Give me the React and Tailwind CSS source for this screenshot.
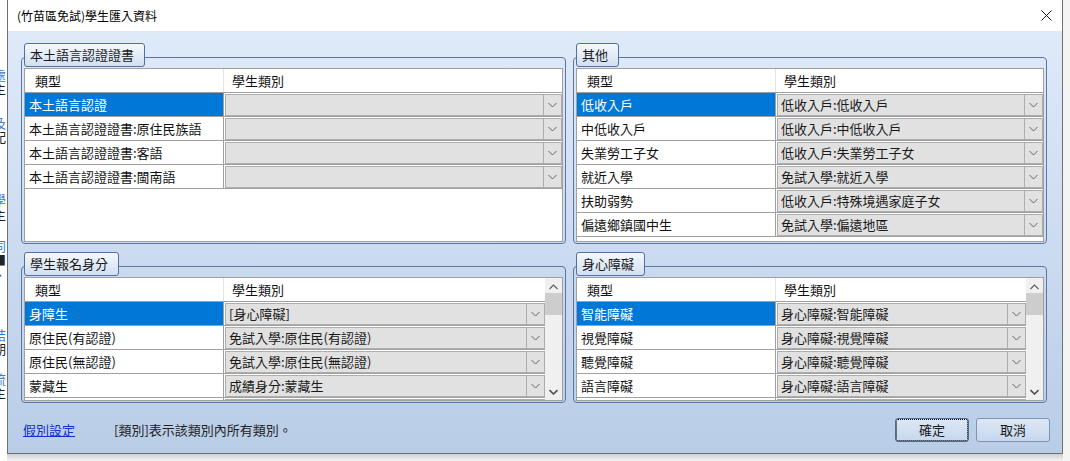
import React from "react";

const topLeft = [
  ["本土語言認證", ""],
  ["本土語言認證證書:原住民族語", ""],
  ["本土語言認證證書:客語", ""],
  ["本土語言認證證書:閩南語", ""],
];
const topRight = [
  ["低收入戶", "低收入戶:低收入戶"],
  ["中低收入戶", "低收入戶:中低收入戶"],
  ["失業勞工子女", "低收入戶:失業勞工子女"],
  ["就近入學", "免試入學:就近入學"],
  ["扶助弱勢", "低收入戶:特殊境遇家庭子女"],
  ["偏遠鄉鎮國中生", "免試入學:偏遠地區"],
];
const bottomLeft = [
  ["身障生", "[身心障礙]"],
  ["原住民(有認證)", "免試入學:原住民(有認證)"],
  ["原住民(無認證)", "免試入學:原住民(無認證)"],
  ["蒙藏生", "成績身分:蒙藏生"],
  ["僑生", "成績身分:僑生"],
];
const bottomRight = [
  ["智能障礙", "身心障礙:智能障礙"],
  ["視覺障礙", "身心障礙:視覺障礙"],
  ["聽覺障礙", "身心障礙:聽覺障礙"],
  ["語言障礙", "身心障礙:語言障礙"],
  ["肢體障礙", "身心障礙:肢體障礙"],
];

function Chevron() {
  return (
    <svg width="9" height="6" viewBox="0 0 9 6">
      <path d="M0.5 1 L4.5 5 L8.5 1" fill="none" stroke="#666" strokeWidth="1" />
    </svg>
  );
}

function Combo({ text }) {
  return (
    <div className="h-full flex border border-[#adadad] bg-[#e1e1e1]">
      <div className="flex-1 min-w-0 pl-[3px] flex items-center whitespace-nowrap overflow-hidden text-[#1a1a1a]">
        {text}
      </div>
      <div className="w-[18px] shrink-0 border-l border-[#adadad] flex items-center justify-center">
        <Chevron />
      </div>
    </div>
  );
}

function Scrollbar() {
  return (
    <div className="w-[17px] shrink-0 bg-[#f0f0f0] flex flex-col">
      <div className="h-[15px] shrink-0 flex items-center justify-center pt-[2px]">
        <svg width="9" height="6" viewBox="0 0 9 6">
          <path d="M0.5 5 L4.5 1 L8.5 5" fill="none" stroke="#606060" strokeWidth="1.2" />
        </svg>
      </div>
      <div className="h-[22px] shrink-0 bg-[#cdcdcd]" />
      <div className="flex-1" />
      <div className="h-[15px] shrink-0 flex items-center justify-center pb-[2px]">
        <svg width="9" height="6" viewBox="0 0 9 6">
          <path d="M0.5 1 L4.5 5 L8.5 1" fill="none" stroke="#505050" strokeWidth="1.6" />
        </svg>
      </div>
    </div>
  );
}

function Table({ rows, scroll }) {
  return (
    <div className="mt-[1px] flex-1 min-h-0 flex border border-[#a0a0a0] bg-white overflow-hidden">
      <div className="flex-1 min-w-0 flex flex-col">
        <div className="h-[24px] shrink-0 flex border-b border-[#a0a0a0]">
          <div className="w-[199px] shrink-0 border-r border-[#e3e3e3] pl-[10px] flex items-center">類型</div>
          <div className="flex-1 pl-[8px] flex items-center">學生類別</div>
        </div>
        {rows.map(([a, b], i) => (
          <div key={i} className="h-[24px] shrink-0 flex border-b border-[#a0a0a0]">
            <div
              className={
                i === 0
                  ? "w-[199px] shrink-0 border-r border-[#a0a0a0] pl-[4px] flex items-center bg-[#0078d7] text-white whitespace-nowrap"
                  : "w-[199px] shrink-0 border-r border-[#a0a0a0] pl-[4px] flex items-center whitespace-nowrap"
              }
            >
              {a}
            </div>
            <div className="flex-1 min-w-0 pt-[1px] pl-[1px]">
              <Combo text={b} />
            </div>
          </div>
        ))}
      </div>
      {scroll && <Scrollbar />}
    </div>
  );
}

function Group({ title, children }) {
  return (
    <div className="flex flex-col h-full min-h-0">
      <div className="mt-[14px] flex-1 min-h-0 border border-[#5b76a0] rounded-[4px] flex flex-col px-[2px] pb-[1px]">
        <div className="-mt-[15px] self-start h-[24px] pl-[5px] pr-[10px] flex items-center border border-[#5470a0] rounded-[3px] bg-linear-to-b from-[#f6f9fd] to-[#d2dff1] text-[#1a1a1a]">
          {title}
        </div>
        {children}
      </div>
    </div>
  );
}

export default function App() {
  return (
    <div className="w-[1070px] h-[461px] flex bg-[#f4f4f4] overflow-hidden text-[13px] leading-[16px] text-[#111] font-['Noto_Sans_CJK_TC','Noto_Sans_CJK_SC',sans-serif]">
      {/* background app strip */}
      <div className="w-[7px] shrink-0 overflow-hidden bg-white flex flex-col leading-[14px]">
        <div className="mt-[68px] -ml-[7px] text-[#3a7bd5]">處</div>
        <div className="-ml-[7px] text-[#222]">主</div>
        <div className="mt-[20px] -ml-[7px] text-[#3a7bd5]">及</div>
        <div className="-ml-[7px] text-[#222]">配</div>
        <div className="mt-[49px] -ml-[7px] text-[#3a7bd5]">學</div>
        <div className="mt-[1px] -ml-[7px] text-[#222]">主</div>
        <div className="mt-[17px] -ml-[7px] text-[#3a7bd5]">同</div>
        <div className="-ml-[7px] text-[#222]">■</div>
        <div className="-ml-[7px] text-[#222]">、</div>
        <div className="mt-[47px] -ml-[7px] text-[#3a7bd5]">結</div>
        <div className="-ml-[7px] text-[#222]">期</div>
        <div className="mt-[16px] -ml-[7px] text-[#3a7bd5]">流</div>
        <div className="-ml-[7px] text-[#222]">主</div>
      </div>

      <div className="flex flex-col">
        <div className="w-[1056px] h-[454px] shrink-0 border-x border-b border-[#707070] flex flex-col">
          {/* title bar */}
          <div className="h-[31px] shrink-0 bg-white flex items-center pl-[9px] pr-[9px]">
            <div className="flex-1 text-[12px] text-black">(竹苗區免試)學生匯入資料</div>
            <svg width="11" height="11" viewBox="0 0 11 11" className="mr-[1px]">
              <path d="M0.5 0.5 L10.5 10.5 M10.5 0.5 L0.5 10.5" stroke="#111" strokeWidth="1" />
            </svg>
          </div>

          {/* body */}
          <div className="flex-1 min-h-0 flex flex-col bg-linear-to-b from-[#dfeaf9] to-[#b9cde7]">
            <div className="pt-[12px] pl-[13px] grid grid-cols-[545px_474px] grid-rows-[201px_151px] gap-x-[7px] gap-y-[8px]">
              <Group title="本土語言認證證書">
                <Table rows={topLeft} />
              </Group>
              <Group title="其他">
                <Table rows={topRight} />
              </Group>
              <Group title="學生報名身分">
                <Table rows={bottomLeft} scroll />
              </Group>
              <Group title="身心障礙">
                <Table rows={bottomRight} scroll />
              </Group>
            </div>

            {/* footer */}
            <div className="flex-1 flex items-start pt-[15px] pl-[15px] pr-[12px]">
              <div className="h-[24px] flex items-center">
                <span className="text-[#1030d0] underline">假別設定</span>
                <span className="ml-[39px] text-[#222]">[類別]表示該類別內所有類別。</span>
              </div>
              <div className="flex-1" />
              <button className="w-[74px] h-[24px] rounded-[3px] border border-[#55698c] bg-linear-to-b from-[#dde8f6] to-[#c6d7ed] flex items-center justify-center outline-1 outline-dotted outline-black outline-offset-[-2px] text-[#1a1a1a]">
                確定
              </button>
              <button className="ml-[7px] w-[74px] h-[24px] rounded-[3px] border border-[#8093b2] bg-linear-to-b from-[#dde8f6] to-[#c6d7ed] flex items-center justify-center text-[#1a1a1a]">
                取消
              </button>
            </div>
          </div>
        </div>
        <div className="flex-1 bg-linear-to-b from-[#cfcfcf] to-[#f4f4f4]" />
      </div>
      <div className="flex-1 bg-[#f4f4f4]" />
    </div>
  );
}
